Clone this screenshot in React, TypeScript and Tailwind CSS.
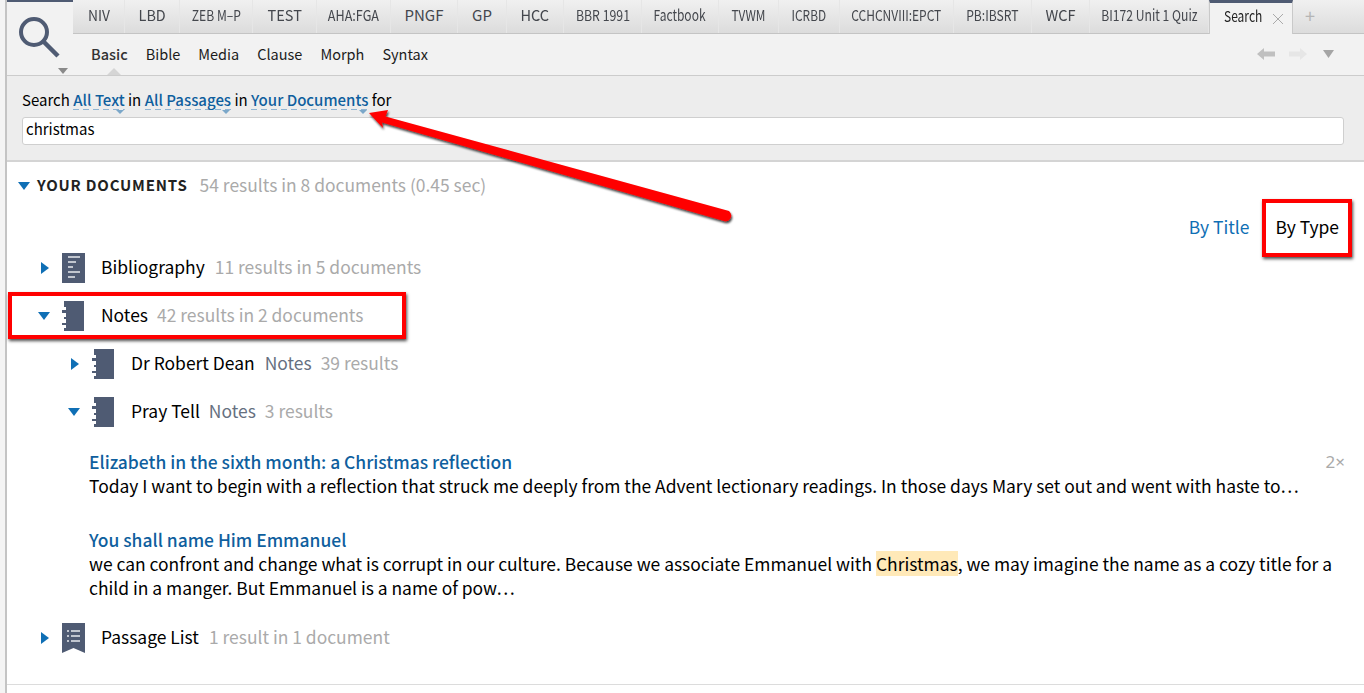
import React from 'react';

const tabs = [
  { label: 'NIV', width: 'w-[52px]', squeeze: 'scale-x-[0.92]' },
  { label: 'LBD', width: 'w-[55px]', squeeze: 'scale-x-[0.96]' },
  { label: 'ZEB M–P', width: 'w-[73px]', squeeze: 'scale-x-[0.81]' },
  { label: 'TEST', width: 'w-[64px]', squeeze: 'scale-x-[0.97]' },
  { label: 'AHA:FGA', width: 'w-[74px]', squeeze: 'scale-x-[0.84]' },
  { label: 'PNGF', width: 'w-[67px]', squeeze: 'scale-x-100' },
  { label: 'GP', width: 'w-[49px]', squeeze: 'scale-x-100' },
  { label: 'HCC', width: 'w-[57px]', squeeze: 'scale-x-[0.97]' },
  { label: 'BBR 1991', width: 'w-[78px]', squeeze: 'scale-x-[0.82]' },
  { label: 'Factbook', width: 'w-[77px]', squeeze: 'scale-x-[0.8]' },
  { label: 'TVWM', width: 'w-[60px]', squeeze: 'scale-x-[0.79]' },
  { label: 'ICRBD', width: 'w-[61px]', squeeze: 'scale-x-[0.79]' },
  { label: 'CCHCNVIII:EPCT', width: 'w-[114px]', squeeze: 'scale-x-[0.8]' },
  { label: 'PB:IBSRT', width: 'w-[78px]', squeeze: 'scale-x-[0.81]' },
  { label: 'WCF', width: 'w-[58px]', squeeze: 'scale-x-[0.97]' },
  { label: 'BI172 Unit 1 Quiz', width: 'w-[119px]', squeeze: 'scale-x-[0.81]' },
];

const subTabs = ['Basic', 'Bible', 'Media', 'Clause', 'Morph', 'Syntax'];

const CaretRight = () => (
  <svg width="8" height="12" viewBox="0 0 8 12" className="fill-[#0f6fb5]"><path d="M0 0l8 6-8 6z" /></svg>
);
const CaretDown = () => (
  <svg width="12" height="8" viewBox="0 0 12 8" className="fill-[#0f6fb5]"><path d="M0 0h12L6 8z" /></svg>
);

const BiblioIcon = () => (
  <svg width="23" height="30" viewBox="0 0 23 30" className="shrink-0 block">
    <rect width="23" height="30" fill="#4f5b73" />
    <path d="M6 4h12M6 9h8M6 14h5M6 19h12M6 24h7" stroke="#e8eaee" strokeWidth="1.4" />
  </svg>
);
const NoteIcon = () => (
  <svg width="23" height="30" viewBox="0 0 23 30" className="shrink-0 block">
    <path d="M3 0h20v30H3v-3h2v-3H1v-2h4v-4H3v-2h2v-4H1V9h4V6H3z" fill="#4f5b73" />
  </svg>
);
const ListIcon = () => (
  <svg width="23" height="30" viewBox="0 0 23 30" className="shrink-0 block">
    <path d="M0 0h23v30l-11.500-5L0 30z" fill="#4f5b73" />
    <path d="M9 8h9M9 13h9M9 18h9M5 8h2M5 13h2M5 18h2" stroke="#e8eaee" strokeWidth="1.5" />
  </svg>
);

const Picker = ({ children }: { children: React.ReactNode }) => (
  <span className="relative inline-block font-medium text-[#0f5f9e] leading-[19px] pb-[1px] bg-[repeating-linear-gradient(90deg,#8fb4d2_0_6px,transparent_6px_10px)] bg-[length:100%_1px] bg-bottom bg-no-repeat">
    {children}
    <span className="absolute right-[1px] bottom-[-4px] w-0 h-0 border-x-[4px] border-x-transparent border-t-[4px] border-t-[#7ba7c9]" />
  </span>
);

export default function App() {
  return (
    <div className="relative w-[1364px] h-[693px] overflow-hidden bg-white flex font-['Noto_Sans_CJK_SC','Noto_Sans',sans-serif] text-black">
      <div className="w-[7px] shrink-0 bg-[#f4f4f4] border-r-2 border-[#c4c4c4]" />
      <div className="flex-1 flex flex-col min-w-0">
        {/* top bars */}
        <div className="flex h-[76px] shrink-0 bg-[#f2f2f2] border-b border-[#cccccc]">
          <div className="relative w-[66px] shrink-0 border-t-2 border-[#4f5b73]">
            <svg width="44" height="44" viewBox="0 0 44 44" className="absolute left-[11px] top-[14px]">
              <circle cx="16" cy="16" r="13" fill="none" stroke="#4f5b73" strokeWidth="4" />
              <path d="M25.500 25.500l14.500 14.500" stroke="#4f5b73" strokeWidth="4.500" />
            </svg>
            <span className="absolute left-[51px] top-[66px] w-0 h-0 border-x-[5px] border-x-transparent border-t-[6px] border-t-[#8a8a8a]" />
          </div>
          <div className="flex-1 flex flex-col min-w-0">
            <div className="flex h-[34px] shrink-0">
              <div className="flex flex-1 h-[34px] bg-gradient-to-b from-[#f0f0f0] to-[#dcdcdc] border-b border-[#c4c4c4]">
                {tabs.map((tab) => (
                  <div key={tab.label} className={`${tab.width} shrink-0 flex items-center justify-center text-[15px] text-[#44474d] border-r border-[#e6e6e6] pb-[3px] whitespace-nowrap`}>
                    <span className={`${tab.squeeze} inline-block`}>{tab.label}</span>
                  </div>
                ))}
                <div className="w-[84px] shrink-0 h-[34px] flex items-center bg-[#f2f2f2] border-t-[3px] border-[#4f5b73] pl-[14px] text-[15px] text-[#222] border-x border-x-[#c9c9c9]">
                  <span className="inline-block w-[38px] scale-x-[0.8] origin-left pb-[5px]">Search</span>
                  <svg width="10" height="10" viewBox="0 0 10 10" className="ml-[11px] mt-[1px]"><path d="M0 0l10 10M10 0L0 10" stroke="#aaa" strokeWidth="1" /></svg>
                </div>
                <div className="pl-[12px] flex items-center text-[18px] text-[#b5b5b5] pb-[3px]">+</div>
              </div>
            </div>
            <div className="relative flex-1 flex items-center pl-[18px] gap-[18px] text-[14.500px] text-[#1c1c1c] pb-[1px]">
              {subTabs.map((tab, i) => (
                <span key={tab} className={i === 0 ? 'font-medium text-[#333]' : ''}>{tab}</span>
              ))}
              <span className="absolute left-[34px] bottom-0 w-0 h-0 border-x-[7px] border-x-transparent border-b-[7px] border-b-[#d5d5d5]" />
              <div className="ml-auto flex items-center gap-[14px] pr-[30px]">
                <svg width="18" height="14" viewBox="0 0 18 14" className="fill-[#c0c0c0]"><path d="M0 7l7-6v3.500h11v5H7V13z" /></svg>
                <svg width="18" height="14" viewBox="0 0 18 14" className="fill-[#e6e6e6]"><path d="M18 7l-7-6v3.500H0v5h11V13z" /></svg>
                <svg width="11" height="8" viewBox="0 0 11 8" className="ml-[2px] fill-[#a5a5a5]"><path d="M0 0h11L5.500 8z" /></svg>
              </div>
            </div>
          </div>
        </div>

        {/* search form */}
        <div className="h-[86px] shrink-0 bg-[#ededed] border-b-2 border-[#d4d4d4] pl-[15px] pr-[20px] pt-[14px]">
          <div className="text-[15px] leading-[19px] h-[27px] whitespace-pre">
            Search <Picker>All Text</Picker> in <Picker>All Passages</Picker> in <Picker>Your Documents</Picker> for
          </div>
          <div className="h-[28px] bg-white border border-[#cfcfcf] rounded-[3px] pl-[3px] pb-[3px] flex items-center text-[15px]">christmas</div>
        </div>

        {/* results */}
        <div className="flex-1 min-h-0 text-[17.450px]">
          <div className="flex items-center h-[48px] pl-[11px]">
            <CaretDown />
            <div className="flex items-center pb-[2px]">
              <span className="ml-[7px] text-[15px] font-semibold tracking-[0.8px] text-[#222]">YOUR DOCUMENTS</span>
              <span className="ml-[12px] text-[#aaaaaa]">54 results in 8 documents (0.45 sec)</span>
            </div>
          </div>
          <div className="flex justify-end items-center h-[36px] pr-[25px] -mt-[1px] gap-[26px] pt-[1px]">
            <span className="text-[#0f6fb5]">By Title</span>
            <span>By Type</span>
          </div>
          <div className="flex items-center h-[48px] pl-[34px] -mt-[1px]">
            <CaretRight />
            <span className="ml-[13px]"><BiblioIcon /></span>
            <div className="flex items-center pb-[2px]">
              <span className="ml-[16px]">Bibliography</span>
              <span className="ml-[10px] text-[#aaaaaa]">11 results in 5 documents</span>
            </div>
          </div>
          <div className="flex items-center h-[48px] pl-[31px]">
            <CaretDown />
            <span className="ml-[11px]"><NoteIcon /></span>
            <div className="flex items-center pb-[2px]">
              <span className="ml-[17px]">Notes</span>
              <span className="ml-[9px] text-[#aaaaaa]">42 results in 2 documents</span>
            </div>
          </div>
          <div className="flex items-center h-[48px] pl-[64px]">
            <CaretRight />
            <span className="ml-[12px]"><NoteIcon /></span>
            <div className="flex items-center pb-[2px]">
              <span className="ml-[17px]">Dr Robert Dean</span>
              <span className="ml-[10px] text-[#66707f]">Notes</span>
              <span className="ml-[9px] text-[#aaaaaa]">39 results</span>
            </div>
          </div>
          <div className="flex items-center h-[48px] pl-[61px]">
            <CaretDown />
            <span className="ml-[11px]"><NoteIcon /></span>
            <div className="flex items-center pb-[2px]">
              <span className="ml-[17px]">Pray Tell</span>
              <span className="ml-[9px] text-[#66707f]">Notes</span>
              <span className="ml-[9px] text-[#aaaaaa]">3 results</span>
            </div>
          </div>
          <div className="pl-[82px] pr-[22px] pt-[14px] leading-[24px]">
            <div className="flex justify-between">
              <span className="font-medium text-[#0f5f9e]">Elizabeth in the sixth month: a Christmas reflection</span>
              <span className="text-[#aaaaaa] font-['Noto_Sans',sans-serif] text-[17px] -mr-[3px]">2×</span>
            </div>
            <div className="whitespace-nowrap">Today I want to begin with a reflection that struck me deeply from the Advent lectionary readings. In those days Mary set out and went with haste to…</div>
            <div className="mt-[30px] font-medium text-[#0f5f9e]">You shall name Him Emmanuel</div>
            <div>
              we can confront and change what is corrupt in our culture. Because we associate Emmanuel with <span className="bg-[#ffe9b8]">Christmas</span>, we may imagine the name as a cozy title for a child in a manger. But Emmanuel is a name of pow…
            </div>
          </div>
          <div className="flex items-center h-[48px] pl-[34px] mt-[14px]">
            <CaretRight />
            <span className="ml-[13px]"><ListIcon /></span>
            <div className="flex items-center pb-[2px]">
              <span className="ml-[16px]">Passage List</span>
              <span className="ml-[10px] text-[#aaaaaa]">1 result in 1 document</span>
            </div>
          </div>
          <div className="border-t border-[#dcdcdc] mt-[22px]" />
        </div>
      </div>

      {/* screenshot annotations */}
      <div className="absolute left-[8px] top-[292px] w-[398px] h-[47px] border-[4px] border-[#ff0000] shadow-[1px_2px_3px_rgba(0,0,0,0.7)]" />
      <div className="absolute left-[1262px] top-[199px] w-[90px] h-[58px] border-[4px] border-[#ff0000] shadow-[1px_2px_3px_rgba(0,0,0,0.7)]" />
      <svg width="1364" height="693" className="absolute left-0 top-0 pointer-events-none">
        <defs>
          <filter id="arrowShadow" x="-5%" y="-20%" width="110%" height="140%">
            <feDropShadow dx="1" dy="2" stdDeviation="1.200" floodColor="#000" floodOpacity="0.75" />
          </filter>
        </defs>
        <path d="M369 113L388 110L385.500 116.500L729 211Q733 215 730 219Q728 222 724 221L382 122.500L383 128Z" fill="#ff0000" filter="url(#arrowShadow)" />
      </svg>
    </div>
  );
}
